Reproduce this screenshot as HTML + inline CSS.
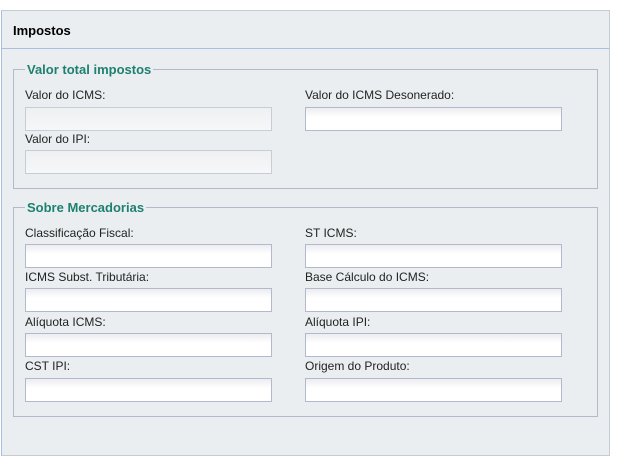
<!DOCTYPE html>
<html><head><meta charset="utf-8"><style>
body{margin:0;width:619px;height:465px;background:#fff;font-family:"Liberation Sans",Arial,sans-serif;position:relative;overflow:hidden}
.panel{position:absolute;left:1px;top:10px;width:607px;height:444px;background:#ebeef0;border:1px solid #c5cbd6;border-left-color:#a9bfe0}
.hdr{position:absolute;left:1px;top:10px;width:608px;height:38px;border-bottom:1px solid #a9bfe0}
.hdr span{position:absolute;left:12px;top:13px;font-weight:bold;font-size:13px;color:#000}
.fs{position:absolute;border:1px solid #b3b9cc;left:13px;width:583px}
.lg{position:absolute;background:#ebeef0;color:#1e8070;font-weight:bold;font-size:13px;padding:0 2px;left:25px}
.l{position:absolute;font-size:12px;color:#222}
.i{position:absolute;height:22px;border:1px solid #b3b9cc;background:linear-gradient(#ececf1,#fff 40%)}
.d{background:linear-gradient(#eef0f1,#f6f7f8);border-color:#c8ccd4}
.a{left:25px;width:245px}.b{left:305px;width:255px}
</style></head><body>
<div class="panel"></div>
<div class="hdr"><span>Impostos</span></div>
<div class="fs" style="top:69px;height:118px"></div>
<div class="lg" style="top:62px">Valor total impostos</div>
<div class="l" style="left:25px;top:88px">Valor do ICMS:</div>
<div class="l" style="left:305px;top:88px">Valor do ICMS Desonerado:</div>
<div class="i d a" style="top:107px"></div>
<div class="i b" style="top:107px"></div>
<div class="l" style="left:25px;top:132px">Valor do IPI:</div>
<div class="i d a" style="top:150px"></div>
<div class="fs" style="top:207px;height:208px"></div>
<div class="lg" style="top:200px">Sobre Mercadorias</div>
<div class="l" style="left:25px;top:226px">Classificação Fiscal:</div>
<div class="l" style="left:305px;top:226px">ST ICMS:</div>
<div class="i a" style="top:244px"></div><div class="i b" style="top:244px"></div>
<div class="l" style="left:25px;top:270px">ICMS Subst. Tributária:</div>
<div class="l" style="left:305px;top:270px">Base Cálculo do ICMS:</div>
<div class="i a" style="top:288px"></div><div class="i b" style="top:288px"></div>
<div class="l" style="left:25px;top:315px">Alíquota ICMS:</div>
<div class="l" style="left:305px;top:315px">Alíquota IPI:</div>
<div class="i a" style="top:333px"></div><div class="i b" style="top:333px"></div>
<div class="l" style="left:25px;top:359px">CST IPI:</div>
<div class="l" style="left:305px;top:359px">Origem do Produto:</div>
<div class="i a" style="top:378px"></div><div class="i b" style="top:378px"></div>
</body></html>
